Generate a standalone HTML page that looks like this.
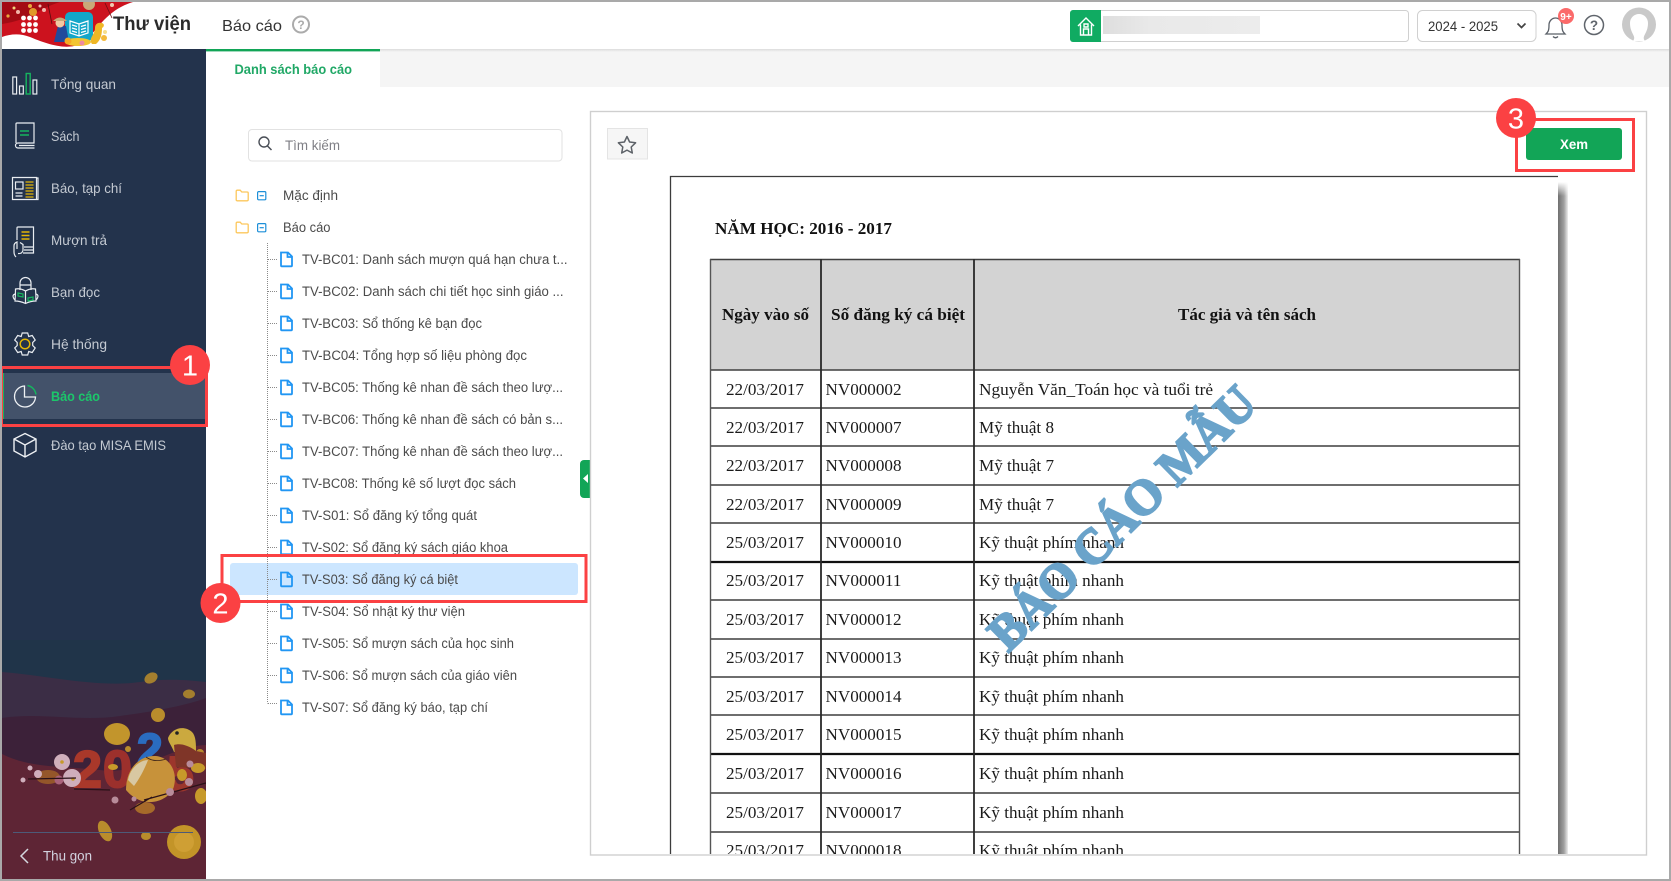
<!DOCTYPE html>
<html lang="vi">
<head>
<meta charset="utf-8">
<title>Thư viện - Báo cáo</title>
<style>
html,body{margin:0;padding:0;background:#fff;width:1671px;height:881px;overflow:hidden}
svg{display:block}
text{font-family:"Liberation Sans","Noto Sans CJK SC",sans-serif}
.m{font-size:14px;fill:#c4cad2}
.t{font-size:13.5px;fill:#4b4b4b}
.s text{font-family:"Liberation Serif","Noto Serif CJK SC",serif;font-size:17px;fill:#1a1a1a}
.sb text{font-family:"Liberation Serif","Noto Serif CJK SC",serif;font-size:17px;font-weight:bold;fill:#111}
.c{font-size:29px;fill:#fff;text-anchor:middle}
</style>
</head>
<body>
<svg width="1671" height="881" viewBox="0 0 1671 881" xmlns="http://www.w3.org/2000/svg">
<defs>
<linearGradient id="sh" x1="0" x2="1" y1="0" y2="0"><stop offset="0" stop-color="#6f6f6f"/><stop offset=".6" stop-color="#a0a0a0"/><stop offset="1" stop-color="#eee"/></linearGradient>
<linearGradient id="shf" x1="0" x2="0" y1="0" y2="1"><stop offset="0" stop-color="#fff"/><stop offset="1" stop-color="#fff" stop-opacity="0"/></linearGradient>
<linearGradient id="sb" x1="0" x2="1" y1="0" y2="0"><stop offset="0" stop-color="#dedede"/><stop offset=".3" stop-color="#e9e9e9"/><stop offset="1" stop-color="#ececec"/></linearGradient>
<linearGradient id="hs" x1="0" x2="0" y1="0" y2="1"><stop offset="0" stop-color="#dcdcdc"/><stop offset="1" stop-color="#f5f5f5"/></linearGradient>
<clipPath id="frame"><rect x="592" y="112" width="1053" height="742"/></clipPath>
<clipPath id="side"><rect x="2" y="49" width="204" height="830"/></clipPath>
<g id="doc"><path d="M1 1.5h7l4 4v9a.8.8 0 0 1-.8.8H1.8a.8.8 0 0 1-.8-.8z" fill="none" stroke="#2196f3" stroke-width="1.8"/><path d="M7.5 1.5v4.500h4.500" fill="none" stroke="#2196f3" stroke-width="1.8"/></g>
<g id="fold"><path d="M.7 2.2a1 1 0 0 1 1-1h3l1.6 1.8h5.4a1 1 0 0 1 1 1v6.8a1 1 0 0 1-1 1H1.7a1 1 0 0 1-1-1z" fill="#fff" stroke="#fcc75c" stroke-width="1.3"/></g>
<g id="minus"><rect x=".6" y=".6" width="8.2" height="8.2" rx="1" fill="none" stroke="#1d8fd8" stroke-width="1.2"/><path d="M2.6 4.7h4.2" stroke="#1d8fd8" stroke-width="1.2"/></g>
</defs>

<rect width="1671" height="881" fill="#fff"/>

<!-- top bar -->
<rect x="380" y="49" width="1289" height="38" fill="#f5f5f5"/>
<rect x="380" y="49" width="1289" height="3" fill="url(#hs)"/>
<rect x="206" y="49" width="174" height="2.4" fill="#12a557"/>

<!-- logo banner -->
<path d="M2 2H133C120 6 112 12 104 20C96 28 88 42 74 46C60 49 42 42 30 37C20 33 10 34 2 37Z" fill="#cc121e"/>
<path d="M2 2H60C40 8 30 20 2 24Z" fill="#a30b14"/>
<circle cx="18" cy="12" r="2" fill="#f3b5a8"/><circle cx="14" cy="8" r="1.5" fill="#f3d37a"/><circle cx="30" cy="6" r="2" fill="#e9a83c"/><circle cx="44" cy="10" r="2" fill="#f1b9b0"/><circle cx="40" cy="6" r="1.5" fill="#f1b9b0"/><ellipse cx="33" cy="12" rx="4" ry="4" fill="#e09a2a"/><circle cx="89" cy="4" r="6" fill="#caa878"/><circle cx="112" cy="5" r="2" fill="#f1c9b0"/><circle cx="8" cy="16" r="1.6" fill="#e9a83c"/>
<path d="M48 4L52 24" stroke="#5a0c10" stroke-width=".8" fill="none"/>
<path d="M105 3L112 18" stroke="#6d0f12" stroke-width=".8" fill="none"/>
<g fill="#fff"><circle cx="23.5" cy="18" r="2.4"/><circle cx="29.5" cy="18" r="2.4"/><circle cx="35.5" cy="18" r="2.4"/><circle cx="23.5" cy="24.5" r="2.4"/><circle cx="29.5" cy="24.5" r="2.4"/><circle cx="35.5" cy="24.5" r="2.4"/><circle cx="23.5" cy="30.5" r="2.4"/><circle cx="29.5" cy="30.5" r="2.4"/><circle cx="35.5" cy="30.5" r="2.4"/></g>
<rect x="65" y="12" width="28" height="29" rx="5" fill="#12a6c9"/>
<g fill="none" stroke="#fff" stroke-width="1.2"><path d="M70 21l9 3 9-3v12l-9 3-9-3z"/><path d="M79 24v12"/><path d="M72 25l5 1.5M72 28l5 1.5M72 31l5 1.5M86 25l-5 1.5M86 28l-5 1.5M86 31l-5 1.500"/></g>
<path d="M54 42l4-16h8l3 16z" fill="#214a9c"/>
<circle cx="60" cy="23" r="4.5" fill="#f1c9a2"/>
<path d="M53 21q7-7 14 0z" fill="#c9a778"/>
<ellipse cx="78" cy="42" rx="13" ry="4" fill="#f3c531"/>
<circle cx="68" cy="41" r="3.5" fill="#f6a821"/>
<path d="M92 44c-4-6 3-9 3-16 0-4 3-6 7-5 3 1 2 4 0 5 0 6-1 12-6 16z" fill="#efb726"/>
<circle cx="104" cy="38" r="3" fill="#f4b93a"/>
<circle cx="105" cy="32" r="2" fill="#f6dd8a"/>
<circle cx="82" cy="43" r="2.5" fill="#ef8aa0"/>

<text x="113" y="30" font-size="19" font-weight="bold" fill="#2b2b2b" textLength="78" lengthAdjust="spacingAndGlyphs">Thư viện</text>
<text x="222" y="31" font-size="16" fill="#333" textLength="60" lengthAdjust="spacingAndGlyphs">Báo cáo</text>
<circle cx="301" cy="24.5" r="8" fill="none" stroke="#ababab" stroke-width="2"/>
<text x="301" y="29" font-size="12" font-weight="bold" fill="#ababab" text-anchor="middle">?</text>

<!-- search school -->
<rect x="1070.5" y="10.5" width="338" height="31" rx="3" fill="#fff" stroke="#d0d0d0"/>
<path d="M1073 10h28v32h-28a3 3 0 0 1-3-3V13a3 3 0 0 1 3-3z" fill="#10ab62"/>
<path d="M1078 26l8-8 8 8M1080.500 24.500V35h11V24.500M1083.500 35v-6h5v6M1084 24h4v3h-4z" fill="none" stroke="#fff" stroke-width="1.4"/>
<rect x="1103" y="16" width="157" height="18" fill="url(#sb)"/>
<rect x="1417.500" y="10.500" width="118.500" height="31" rx="5" fill="#fff" stroke="#d0d0d0"/>
<text x="1428" y="31" font-size="13.500" fill="#333" textLength="70" lengthAdjust="spacingAndGlyphs">2024 - 2025</text>
<path d="M1517.500 23.500l4 4 4-4" fill="none" stroke="#444" stroke-width="1.700"/>
<path d="M1546 34c2-2 3-3 3-9 0-4 3-7 6.500-7s6.500 3 6.500 7c0 6 1 7 3 9z" fill="none" stroke="#5a6068" stroke-width="1.300"/>
<path d="M1553 36.500q2.500 2.500 5 0" fill="none" stroke="#5a6068" stroke-width="1.300"/>
<circle cx="1566" cy="16" r="8" fill="#fb6a6a"/>
<text x="1566" y="20" font-size="10" font-weight="bold" fill="#fff" text-anchor="middle">9+</text>
<circle cx="1594" cy="25" r="9.500" fill="none" stroke="#60656c" stroke-width="1.500"/>
<text x="1594" y="30" font-size="13.500" font-weight="bold" fill="#60656c" text-anchor="middle">?</text>
<circle cx="1639" cy="24.500" r="17" fill="#c9c9c9"/>
<path d="M1633 41c4-5-3-7-3-18 0-5 4-9 9-9s9 4 9 9c0 11-7 13-3 18z" fill="#fff"/>

<!-- sidebar -->
<rect x="2" y="49" width="204" height="830" fill="#23334c"/>
<g clip-path="url(#side)">
<rect x="2" y="640" width="204" height="240" fill="#203449"/>
<path d="M2 672C50 676 100 688 140 682C165 678 190 680 206 682V880H2Z" fill="#3b2d45"/>
<path d="M2 718C40 712 80 722 120 716C150 712 185 706 206 698V880H2Z" fill="#3c2139"/>
<path d="M2 754C30 768 60 766 100 770C140 776 170 746 206 745V880H2Z" fill="#5e2535"/>
<rect x="2" y="775" width="204" height="105" fill="#5e2535"/>
<!-- coins -->
<g fill="#b98c2c">
<ellipse cx="151" cy="678" rx="7" ry="5" transform="rotate(-30 151 678)" fill="#a47f2e"/>
<ellipse cx="189" cy="694" rx="6" ry="4.500" fill="#a47f2e"/>
<ellipse cx="158" cy="715" rx="7" ry="7"/>
<ellipse cx="117" cy="734" rx="13" ry="11" fill="#c2952c"/>
<circle cx="128" cy="749" r="3"/>
<circle cx="200" cy="753" r="4"/>
<ellipse cx="105" cy="831" rx="6" ry="11" transform="rotate(-25 105 831)"/>
<ellipse cx="146" cy="836" rx="5" ry="4"/>
<circle cx="184" cy="842" r="17" fill="#c39428"/>
<circle cx="184" cy="842" r="10" fill="#cf9f34"/>
<ellipse cx="48" cy="777" rx="12" ry="7" fill="#94562a"/>
</g>
<!-- 2025 -->
<g style="paint-order:stroke" stroke-width="2">
<text x="73" y="787" font-size="52" font-weight="bold" fill="#a9382a" stroke="#a9382a">2</text>
<text x="103" y="787" font-size="52" font-weight="bold" fill="#9c302c" stroke="#9c302c">0</text>
<text x="137" y="766" font-size="46" font-weight="bold" fill="#2a6cc0" stroke="#2a6cc0">2</text>
<text x="167" y="790" font-size="48" font-weight="bold" fill="#9c362c" stroke="#9c362c">5</text>
</g>
<path d="M126 790c0-22 14-35 30-34 12 1 22 14 18 30-3 14-30 26-48 4z" fill="#c7923a"/>
<path d="M128 780c2-12 12-20 20-20-3 8-8 18-14 26z" fill="#d8c8a2"/>
<path d="M146 757q8 6 20 2" stroke="#3d2418" stroke-width=".8" fill="none"/>
<path d="M168 738c4-10 16-13 24-6 4 4 4 12 4 20h-22c-2-6-6-10-6-14z" fill="#cba93f"/>
<circle cx="177" cy="733" r="1.800" fill="#222"/>
<path d="M174 745c6-2 14 0 22 6l10 2v16l-30-2z" fill="#7f3528"/>
<ellipse cx="182" cy="775" rx="5" ry="6" fill="#c79a2a"/>
<ellipse cx="198" cy="768" rx="7" ry="5" fill="#c79a2a"/>
<ellipse cx="201" cy="796" rx="6" ry="8" fill="#c79a2a"/>
<ellipse cx="113" cy="767" rx="5" ry="3" fill="#c79a2a"/>
<ellipse cx="145" cy="808" rx="10" ry="6" fill="#a66a2a"/>
<!-- blossoms -->
<g fill="#cfaebb"><circle cx="62" cy="762" r="8"/><circle cx="72" cy="778" r="9"/><circle cx="38" cy="774" r="4"/><circle cx="30" cy="768" r="2.500"/><circle cx="23" cy="780" r="2.500"/><circle cx="59" cy="780" r="4.500" fill="#a9627a"/></g>
<circle cx="62" cy="762" r="1.800" fill="#c79a2a"/><circle cx="73" cy="779" r="1.800" fill="#c79a2a"/>
<path d="M28 779L76 778M74 789L110 790M144 800L206 783M152 797L130 810" stroke="#2a1118" stroke-width="1.200" fill="none"/>
<g fill="#b88c9a"><circle cx="189" cy="782" r="4"/><circle cx="170" cy="792" r="4"/><circle cx="115" cy="800" r="3.500"/><circle cx="134" cy="799" r="2.500"/><circle cx="190" cy="764" r="3.500"/></g>
<rect x="13" y="832" width="180" height="1" fill="#4d5a78"/>
</g>
<path d="M28 849l-7 7 7 7" fill="none" stroke="#d4d8df" stroke-width="1.500"/>
<text x="43" y="860.500" font-size="14" fill="#d3d3e0" textLength="49" lengthAdjust="spacingAndGlyphs">Thu gọn</text>

<!-- menu icons -->
<g fill="none" stroke="#e9edf1" stroke-width="1.200">
<rect x="12.800" y="77" width="3.800" height="17"/><rect x="19.500" y="86" width="3.800" height="8"/><rect x="33" y="80" width="3.800" height="14"/>
<rect x="26.200" y="73.500" width="4" height="20.500" stroke="#16b45f" stroke-width="1.400"/>
<path d="M16 143v-19a1 1 0 0 1 1-1h17v20H18a2.500 2.500 0 0 0 0 5h16.500M19 145.500h15.500"/>
<path d="M20 131h9M20 135h9" stroke="#16b45f" stroke-width="1.500"/>
<path d="M12.500 199.500v-22h24v22zM36.500 178h1.500v21.500h-2"/>
<rect x="15.500" y="182" width="7.500" height="7"/>
<path d="M15.500 193h7M15.500 196h7" stroke="#e9edf1"/>
<path d="M25.500 182h8M25.500 185h8M25.500 188h8M25.500 191h8M25.500 194h8M25.500 197h8" stroke="#e3b505"/>
<path d="M17 240v-12a1 1 0 0 1 1-1h15.500v20H24M24 250h9.500M33.500 247v6H23"/>
<path d="M14 252v-6q0-3 3-4v7M14 252q0 3 2 5M18 253.500q4 .5 5-3v-6l-3-2"/>
<path d="M21.500 232h8M21.500 235.500h8M21.500 239h8" stroke="#e3b505" stroke-width="1.500"/>
<path d="M20 290v-7a5.500 5.500 0 0 1 11 0v7M20 285h11"/>
<path d="M25.500 291q-5-3-10-2 0 6-.5 12 5 0 10.500 2.500 5-2.500 10.500-2.500 0-6-.5-12-5-1-10 2zM25.500 291v12M15 294q-3 1-1.500 4 1 2 2 2M36 294q3 1 1.500 4-1 2-2 2"/>
<path d="M18 293l5 1v3l-5-1zM28 298l5-1v3l-5 1z" stroke="#16b45f"/>
<path d="M30 332.500l1 3.500 3.500-1 3 4.500-2.500 2.500 0 3 2.500 2.500-3 4.500-3.500-1-1 3.500h-5.500l-1-3.500-3.500 1-3-4.500 2.500-2.500v-3l-2.500-2.500 3-4.500 3.500 1 1-3.500z" transform="translate(-2.300 .5)"/>
<circle cx="25" cy="344" r="4.800" stroke="#e3b505" stroke-width="1.500"/>
</g>
<rect x="4" y="373" width="202" height="46" fill="#43526a"/>
<rect x="2" y="373" width="2" height="46" fill="#16b45f"/>
<g fill="none" stroke="#eef1f4" stroke-width="1.300">
<path d="M24.500 386a10.500 10.500 0 1 0 11 11H24.500z"/>
<path d="M27.500 385.500a10.500 10.500 0 0 1 8.500 9" stroke="#16b45f" stroke-width="1.500"/>
<path d="M25 433.500l11 5.500v12l-11 6-11-6v-12zM14 439l11 6 11-6M25 445v12.500" stroke-width="1.400"/>
</g>

<!-- menu labels -->
<text class="m" x="51" y="89" textLength="65" lengthAdjust="spacingAndGlyphs">Tổng quan</text>
<text class="m" x="51" y="141" textLength="28.500" lengthAdjust="spacingAndGlyphs">Sách</text>
<text class="m" x="51" y="193" textLength="71" lengthAdjust="spacingAndGlyphs">Báo, tạp chí</text>
<text class="m" x="51" y="245" textLength="56" lengthAdjust="spacingAndGlyphs">Mượn trả</text>
<text class="m" x="51" y="297" textLength="49" lengthAdjust="spacingAndGlyphs">Bạn đọc</text>
<text class="m" x="51" y="349" textLength="56" lengthAdjust="spacingAndGlyphs">Hệ thống</text>
<text x="51" y="401" font-size="14" font-weight="bold" fill="#1cc76a" textLength="49" lengthAdjust="spacingAndGlyphs">Báo cáo</text>
<text class="m" x="51" y="450" textLength="115" lengthAdjust="spacingAndGlyphs">Đào tạo MISA EMIS</text>

<!-- tab -->
<text x="234.500" y="74" font-size="13.500" font-weight="bold" fill="#20a866" textLength="117.500" lengthAdjust="spacingAndGlyphs">Danh sách báo cáo</text>

<!-- tree search -->
<rect x="248.500" y="129.500" width="313.500" height="31.500" rx="3.500" fill="#fff" stroke="#e2e2e2"/>
<circle cx="264" cy="142" r="5" fill="none" stroke="#4a4f57" stroke-width="1.400"/>
<path d="M267.500 146l4 4" stroke="#4a4f57" stroke-width="1.500"/>
<text x="285" y="150" font-size="13.500" fill="#7f7f85" textLength="55" lengthAdjust="spacingAndGlyphs">Tìm kiếm</text>

<!-- highlight -->
<rect x="230" y="563" width="348" height="32" rx="3" fill="#cce6ff"/>

<!-- tree -->
<use href="#fold" x="235.500" y="189"/><use href="#minus" x="257" y="191"/>
<use href="#fold" x="235.500" y="221"/><use href="#minus" x="257" y="223"/>
<text class="t" x="283" y="200" textLength="55" lengthAdjust="spacingAndGlyphs">Mặc định</text>
<text class="t" x="283" y="232" textLength="47.500" lengthAdjust="spacingAndGlyphs">Báo cáo</text>
<path d="M267.500 243V703.500" stroke="#8a8a8a" stroke-dasharray="1 1" fill="none"/>
<g stroke="#8a8a8a" stroke-dasharray="1 1" fill="none">
<path d="M268 259.500h9M268 291.500h9M268 323.500h9M268 355.500h9M268 387.500h9M268 419.500h9M268 451.500h9M268 483.500h9M268 515.500h9M268 547.500h9M268 579.500h9M268 611.500h9M268 643.500h9M268 675.500h9M268 703.500h9"/>
</g>
<use href="#doc" x="280" y="251"/><use href="#doc" x="280" y="283"/><use href="#doc" x="280" y="315"/><use href="#doc" x="280" y="347"/><use href="#doc" x="280" y="379"/><use href="#doc" x="280" y="411"/><use href="#doc" x="280" y="443"/><use href="#doc" x="280" y="475"/><use href="#doc" x="280" y="507"/><use href="#doc" x="280" y="539"/><use href="#doc" x="280" y="571"/><use href="#doc" x="280" y="603"/><use href="#doc" x="280" y="635"/><use href="#doc" x="280" y="667"/><use href="#doc" x="280" y="699"/>
<text class="t" x="302" y="264" textLength="265.500" lengthAdjust="spacingAndGlyphs">TV-BC01: Danh sách mượn quá hạn chưa t...</text>
<text class="t" x="302" y="296" textLength="261.500" lengthAdjust="spacingAndGlyphs">TV-BC02: Danh sách chi tiết học sinh giáo ...</text>
<text class="t" x="302" y="328" textLength="180" lengthAdjust="spacingAndGlyphs">TV-BC03: Sổ thống kê bạn đọc</text>
<text class="t" x="302" y="360" textLength="225" lengthAdjust="spacingAndGlyphs">TV-BC04: Tổng hợp số liệu phòng đọc</text>
<text class="t" x="302" y="392" textLength="261" lengthAdjust="spacingAndGlyphs">TV-BC05: Thống kê nhan đề sách theo lượ...</text>
<text class="t" x="302" y="424" textLength="261" lengthAdjust="spacingAndGlyphs">TV-BC06: Thống kê nhan đề sách có bản s...</text>
<text class="t" x="302" y="456" textLength="261" lengthAdjust="spacingAndGlyphs">TV-BC07: Thống kê nhan đề sách theo lượ...</text>
<text class="t" x="302" y="488" textLength="214" lengthAdjust="spacingAndGlyphs">TV-BC08: Thống kê số lượt đọc sách</text>
<text class="t" x="302" y="520" textLength="175" lengthAdjust="spacingAndGlyphs">TV-S01: Sổ đăng ký tổng quát</text>
<text class="t" x="302" y="552" textLength="206" lengthAdjust="spacingAndGlyphs">TV-S02: Sổ đăng ký sách giáo khoa</text>
<text class="t" x="302" y="584" textLength="156" lengthAdjust="spacingAndGlyphs">TV-S03: Sổ đăng ký cá biệt</text>
<text class="t" x="302" y="616" textLength="163" lengthAdjust="spacingAndGlyphs">TV-S04: Sổ nhật ký thư viện</text>
<text class="t" x="302" y="648" textLength="212" lengthAdjust="spacingAndGlyphs">TV-S05: Sổ mượn sách của học sinh</text>
<text class="t" x="302" y="680" textLength="215" lengthAdjust="spacingAndGlyphs">TV-S06: Sổ mượn sách của giáo viên</text>
<text class="t" x="302" y="712" textLength="186" lengthAdjust="spacingAndGlyphs">TV-S07: Sổ đăng ký báo, tạp chí</text>

<!-- collapse -->
<path d="M590 460h-6a4 4 0 0 0-4 4v30a4 4 0 0 0 4 4h6z" fill="#12a557"/>
<path d="M588 474v9l-5-4.500z" fill="#fff"/>

<!-- frame -->
<rect x="590.500" y="111.500" width="1056" height="743.500" fill="#fff" stroke="#cfcfcf" stroke-width="1.400"/>
<rect x="607.500" y="128.500" width="40" height="30.500" fill="#f6f6f6" stroke="#e4e4e4"/>
<path d="M627 136.500l2.600 5.500 6 .8-4.400 4.200 1.100 6-5.300-2.900-5.300 2.900 1.100-6-4.400-4.200 6-.8z" fill="none" stroke="#5d6268" stroke-width="1.500" stroke-linejoin="round"/>

<!-- report page -->
<g clip-path="url(#frame)">
<path d="M670.500 855V176.500H1558" fill="none" stroke="#3c3c3c" stroke-width="1.300"/>
<rect x="1558" y="182" width="10" height="674" fill="url(#sh)"/>
<rect x="1558" y="182" width="10" height="14" fill="url(#shf)"/>
<text x="715" y="234" font-size="17" font-weight="bold" fill="#111" textLength="177" lengthAdjust="spacingAndGlyphs" style="font-family:'Liberation Serif',serif">NĂM HỌC: 2016 - 2017</text>
<rect x="710" y="259" width="810" height="111" fill="#d3d3d3"/>
<g stroke="#3f3f3f" stroke-width="1.400" fill="none">
<path d="M710 259.500H1520M710 370H1520M710 408H1520M710 446H1520M710 485H1520M710 523H1520M710 600H1520M710 639H1520M710 677H1520M710 715H1520M710 793H1520M710 832H1520"/>
</g>
<path d="M710 562H1520M710 754H1520" stroke="#111" stroke-width="2.200"/>
<path d="M710.500 259V856M1519.500 259V856" stroke="#555" stroke-width="1.400"/>
<path d="M821 259V856M974 259V856" stroke="#2a2a2a" stroke-width="1.800"/>
<g class="sb">
<text x="722" y="320" textLength="87" lengthAdjust="spacingAndGlyphs">Ngày vào số</text>
<text x="831" y="320" textLength="134" lengthAdjust="spacingAndGlyphs">Số đăng ký cá biệt</text>
<text x="1178" y="320" textLength="138" lengthAdjust="spacingAndGlyphs">Tác giả và tên sách</text>
</g>
<g class="s">
<text x="726" y="395" textLength="78" lengthAdjust="spacingAndGlyphs">22/03/2017</text><text x="825.500" y="395" textLength="76" lengthAdjust="spacingAndGlyphs">NV000002</text><text x="979" y="395" textLength="234" lengthAdjust="spacingAndGlyphs">Nguyễn Văn_Toán học và tuổi trẻ</text>
<text x="726" y="433" textLength="78" lengthAdjust="spacingAndGlyphs">22/03/2017</text><text x="825.500" y="433" textLength="76" lengthAdjust="spacingAndGlyphs">NV000007</text><text x="979" y="433" textLength="75" lengthAdjust="spacingAndGlyphs">Mỹ thuật 8</text>
<text x="726" y="471" textLength="78" lengthAdjust="spacingAndGlyphs">22/03/2017</text><text x="825.500" y="471" textLength="76" lengthAdjust="spacingAndGlyphs">NV000008</text><text x="979" y="471" textLength="75" lengthAdjust="spacingAndGlyphs">Mỹ thuật 7</text>
<text x="726" y="510" textLength="78" lengthAdjust="spacingAndGlyphs">22/03/2017</text><text x="825.500" y="510" textLength="76" lengthAdjust="spacingAndGlyphs">NV000009</text><text x="979" y="510" textLength="75" lengthAdjust="spacingAndGlyphs">Mỹ thuật 7</text>
<text x="726" y="548" textLength="78" lengthAdjust="spacingAndGlyphs">25/03/2017</text><text x="825.500" y="548" textLength="76" lengthAdjust="spacingAndGlyphs">NV000010</text><text x="979" y="548" textLength="145" lengthAdjust="spacingAndGlyphs">Kỹ thuật phím nhanh</text>
<text x="726" y="586" textLength="78" lengthAdjust="spacingAndGlyphs">25/03/2017</text><text x="825.500" y="586" textLength="76" lengthAdjust="spacingAndGlyphs">NV000011</text><text x="979" y="586" textLength="145" lengthAdjust="spacingAndGlyphs">Kỹ thuật phím nhanh</text>
<text x="726" y="625" textLength="78" lengthAdjust="spacingAndGlyphs">25/03/2017</text><text x="825.500" y="625" textLength="76" lengthAdjust="spacingAndGlyphs">NV000012</text><text x="979" y="625" textLength="145" lengthAdjust="spacingAndGlyphs">Kỹ thuật phím nhanh</text>
<text x="726" y="663" textLength="78" lengthAdjust="spacingAndGlyphs">25/03/2017</text><text x="825.500" y="663" textLength="76" lengthAdjust="spacingAndGlyphs">NV000013</text><text x="979" y="663" textLength="145" lengthAdjust="spacingAndGlyphs">Kỹ thuật phím nhanh</text>
<text x="726" y="702" textLength="78" lengthAdjust="spacingAndGlyphs">25/03/2017</text><text x="825.500" y="702" textLength="76" lengthAdjust="spacingAndGlyphs">NV000014</text><text x="979" y="702" textLength="145" lengthAdjust="spacingAndGlyphs">Kỹ thuật phím nhanh</text>
<text x="726" y="740" textLength="78" lengthAdjust="spacingAndGlyphs">25/03/2017</text><text x="825.500" y="740" textLength="76" lengthAdjust="spacingAndGlyphs">NV000015</text><text x="979" y="740" textLength="145" lengthAdjust="spacingAndGlyphs">Kỹ thuật phím nhanh</text>
<text x="726" y="779" textLength="78" lengthAdjust="spacingAndGlyphs">25/03/2017</text><text x="825.500" y="779" textLength="76" lengthAdjust="spacingAndGlyphs">NV000016</text><text x="979" y="779" textLength="145" lengthAdjust="spacingAndGlyphs">Kỹ thuật phím nhanh</text>
<text x="726" y="818" textLength="78" lengthAdjust="spacingAndGlyphs">25/03/2017</text><text x="825.500" y="818" textLength="76" lengthAdjust="spacingAndGlyphs">NV000017</text><text x="979" y="818" textLength="145" lengthAdjust="spacingAndGlyphs">Kỹ thuật phím nhanh</text>
<text x="726" y="856" textLength="78" lengthAdjust="spacingAndGlyphs">25/03/2017</text><text x="825.500" y="856" textLength="76" lengthAdjust="spacingAndGlyphs">NV000018</text><text x="979" y="856" textLength="145" lengthAdjust="spacingAndGlyphs">Kỹ thuật phím nhanh</text>
</g>
<!-- watermark -->
<text transform="translate(1121 517) rotate(-44.500)" x="-176" y="18" font-size="50" font-weight="bold" fill="#6aa3ca" stroke="#6aa3ca" stroke-width="2.200" textLength="352" lengthAdjust="spacingAndGlyphs" style="font-family:'Liberation Serif',serif">BÁO CÁO MẪU</text>
</g>

<!-- Xem button -->
<rect x="1526" y="128" width="96" height="32" rx="3" fill="#12a557"/>
<text x="1574" y="149" font-size="13.500" font-weight="bold" fill="#fff" text-anchor="middle" textLength="28" lengthAdjust="spacingAndGlyphs">Xem</text>

<!-- annotations -->
<g fill="none" stroke="#fb4143" stroke-width="3">
<rect x="1.500" y="367.500" width="205" height="58"/>
<rect x="222" y="555.500" width="364" height="46"/>
<rect x="1516.500" y="119.500" width="117" height="51"/>
</g>
<circle cx="190" cy="365" r="20" fill="#fb4143"/>
<text class="c" x="190" y="375.500">1</text>
<circle cx="220.500" cy="603" r="20" fill="#fb4143"/>
<text class="c" x="220.500" y="613.500">2</text>
<circle cx="1516" cy="118" r="20" fill="#fb4143"/>
<text class="c" x="1516" y="128.500">3</text>

<!-- outer screenshot border -->
<path d="M1 1H1670V880H1" fill="none" stroke="#a9a9a9" stroke-width="2"/>
<path d="M1 0V881" stroke="#a9a9a9" stroke-width="2"/>
</svg>
</body>
</html>
